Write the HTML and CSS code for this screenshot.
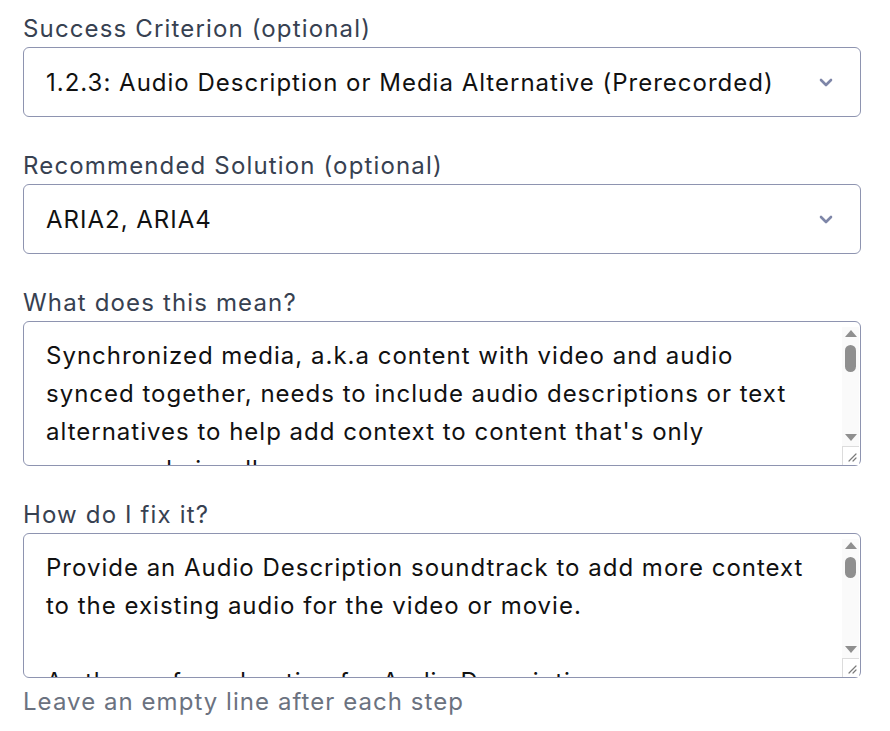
FILE: index.html
```html
<!DOCTYPE html>
<html>
<head>
    <title>Issue Details</title>
    <link rel="stylesheet" href="styles.css">
</head>
<body>
    <form class="issue-form">
        <div class="field">
            <label for="criterion">Success Criterion (optional)</label>
            <div class="select-wrap">
                <select id="criterion">
                    <option>1.2.3: Audio Description or Media Alternative (Prerecorded)</option>
                </select>
                <svg class="chevron" width="14" height="9" viewBox="0 0 14 9"><path d="M2 2l5 5 5-5" fill="none" stroke="#7e86a8" stroke-width="2.6" stroke-linecap="round" stroke-linejoin="round"/></svg>
            </div>
        </div>

        <div class="field">
            <label for="solution">Recommended Solution (optional)</label>
            <div class="select-wrap">
                <select id="solution">
                    <option>ARIA2, ARIA4</option>
                </select>
                <svg class="chevron" width="14" height="9" viewBox="0 0 14 9"><path d="M2 2l5 5 5-5" fill="none" stroke="#7e86a8" stroke-width="2.6" stroke-linecap="round" stroke-linejoin="round"/></svg>
            </div>
        </div>

        <div class="field">
            <label for="meaning">What does this mean?</label>
            <div class="textarea-wrap">
                <textarea id="meaning">Synchronized media, a.k.a content with video and audio synced together, needs to include audio descriptions or text alternatives to help add context to content that's only expressed visually.</textarea>
                <div class="scrollbar">
                    <span class="arrow up"></span>
                    <span class="track"><span class="thumb"></span></span>
                    <span class="arrow down"></span>
                    <span class="corner">
                        <svg width="10" height="10" viewBox="0 0 10 10"><path d="M9 2L2 9M9 6L6 9" stroke="#7a7a7a" stroke-width="1.2" stroke-linecap="round"/></svg>
                    </span>
                </div>
            </div>
        </div>

        <div class="field">
            <label for="fix">How do I fix it?</label>
            <div class="textarea-wrap">
                <textarea id="fix">Provide an Audio Description soundtrack to add more context to the existing audio for the video or movie.

As the preferred option for Audio Descriptions, you can provide a second, user-selectable audio track that includes narration of the visual content.

Alternatively, provide a full text transcript of the media.</textarea>
                <div class="scrollbar">
                    <span class="arrow up"></span>
                    <span class="track"><span class="thumb short"></span></span>
                    <span class="arrow down"></span>
                    <span class="corner">
                        <svg width="10" height="10" viewBox="0 0 10 10"><path d="M9 2L2 9M9 6L6 9" stroke="#7a7a7a" stroke-width="1.2" stroke-linecap="round"/></svg>
                    </span>
                </div>
            </div>
            <p class="hint">Leave an empty line after each step</p>
        </div>
    </form>
</body>
</html>
```

FILE: styles.css
```css
body {
    margin: 0;
    padding: 11px 29px 0 23px;
    background-color: #ffffff;
    font-family: Inter, "Noto Sans", sans-serif;
}

.issue-form {
    display: flex;
    flex-direction: column;
    gap: 31px;
}

.field {
    display: flex;
    flex-direction: column;
}

label {
    font-size: 24px;
    line-height: 36px;
    letter-spacing: 1.15px;
    color: #374151;
}

.select-wrap,
.textarea-wrap {
    position: relative;
}

select {
    appearance: none;
    -webkit-appearance: none;
    width: 100%;
    height: 70px;
    padding: 0 60px 0 22px;
    font-family: inherit;
    font-size: 24px;
    letter-spacing: 1px;
    color: #111111;
    background-color: #ffffff;
    border: 1px solid #8e94b0;
    border-radius: 6px;
}

.chevron {
    position: absolute;
    right: 28px;
    top: 31px;
    pointer-events: none;
}

textarea {
    display: block;
    box-sizing: border-box;
    width: 100%;
    height: 145px;
    padding: 15px 39px 15px 22px;
    font-family: inherit;
    font-size: 24px;
    line-height: 38px;
    letter-spacing: 1px;
    color: #111111;
    border: 1px solid #8e94b0;
    border-radius: 6px;
    overflow: hidden;
    resize: none;
}

/* drawn scrollbar, the classic one with arrow buttons */
.scrollbar {
    position: absolute;
    top: 6px;
    right: 2px;
    bottom: 1px;
    width: 17px;
    display: flex;
    flex-direction: column;
    background-color: #fafafa;
}

.arrow {
    height: 17px;
    position: relative;
}

.arrow::before {
    content: "";
    position: absolute;
    left: 3px;
    width: 0;
    height: 0;
    border-left: 6px solid transparent;
    border-right: 6px solid transparent;
}

.arrow.up::before {
    top: 3px;
    border-bottom: 7px solid #8f8f8f;
}

.arrow.down::before {
    top: 5px;
    border-top: 7px solid #8f8f8f;
}

.track {
    flex: 1;
    padding: 1px 3px;
}

.thumb {
    display: block;
    height: 27px;
    border-radius: 6px;
    background-color: #8f8f8f;
}

.thumb.short {
    height: 21px;
}

.corner {
    height: 19px;
    display: flex;
    align-items: flex-end;
    justify-content: flex-end;
    padding: 0 2px 3px 0;
    box-sizing: border-box;
    background-color: #ffffff;
    border-top: 1px solid #dcdcdc;
    border-left: 1px solid #dcdcdc;
}

.hint {
    margin: 6px 0 0;
    font-size: 24px;
    line-height: 36px;
    letter-spacing: 1.05px;
    color: #6b7280;
}
```
